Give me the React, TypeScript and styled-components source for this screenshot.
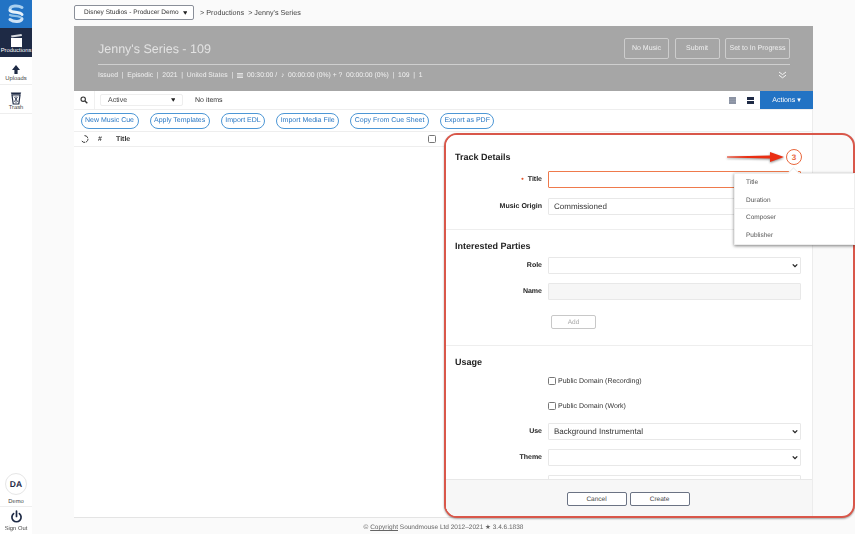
import React from "react";
import styled, { createGlobalStyle } from "styled-components";

const GlobalStyle = createGlobalStyle`
  html, body { margin: 0; padding: 0; height: 100%; background: #fafafa; }
  * { box-sizing: border-box; }
  body {
    font-family: "Liberation Sans", Arial, sans-serif;
    color: #222;
    overflow: hidden;
    text-rendering: geometricPrecision;
  }
`;

const Page = styled.div`
  position: relative;
  display: flex;
  width: 855px;
  height: 534px;
  overflow: hidden;
  opacity: 0.999;
`;

const Sidebar = styled.nav`
  display: flex;
  flex-direction: column;
  width: 32px;
  height: 534px;
  background: #fff;
`;

const LogoTile = styled.div`
  display: flex;
  align-items: center;
  justify-content: center;
  height: 28px;
  background: #2273c4;
`;

const NavItem = styled.div<{ $active?: boolean }>`
  display: flex;
  flex-direction: column;
  align-items: center;
  justify-content: flex-end;
  height: 28.5px;
  padding-bottom: 2px;
  font-size: 5.8px;
  white-space: nowrap;
  color: ${({ $active }) => ($active ? "#fff" : "#444")};
  background: ${({ $active }) => ($active ? "#1e2a45" : "#fff")};
  border-bottom: 1px solid ${({ $active }) => ($active ? "#1e2a45" : "#eee")};
`;

const SidebarBottom = styled.div`
  display: flex;
  flex-direction: column;
  align-items: center;
  margin-top: auto;
`;

const Avatar = styled.div`
  display: flex;
  align-items: center;
  justify-content: center;
  width: 22px;
  height: 22px;
  border: 1px solid #e6e6e6;
  border-radius: 50%;
  font-size: 8.5px;
  font-weight: 700;
  color: #1e2a45;
`;

const SmallLabel = styled.div`
  font-size: 5.8px;
  color: #444;
  line-height: 8px;
`;

const DemoBlock = styled.div`
  display: flex;
  flex-direction: column;
  align-items: center;
  gap: 3px;
  width: 100%;
  border-bottom: 1px solid #eee;
`;

const SignOutBlock = styled.div`
  display: flex;
  flex-direction: column;
  align-items: center;
  gap: 1px;
  padding: 3px 0 1px;
`;

const Main = styled.main`
  display: flex;
  flex-direction: column;
  width: 739px;
  height: 534px;
  margin-left: 42px;
`;

const Crumbs = styled.div`
  display: flex;
  align-items: center;
  gap: 6px;
  height: 26px;
  font-size: 7.2px;
  color: #444;
  padding-bottom: 1px;
`;

const OrgSelect = styled.div`
  display: flex;
  align-items: center;
  justify-content: space-between;
  width: 120px;
  height: 15px;
  padding: 0 6px 0 9px;
  background: #fff;
  border: 1px solid #8a8f99;
  border-radius: 2px;
  font-size: 6.5px;
  color: #333;
`;

const Hero = styled.header`
  height: 65px;
  padding: 10px 23px 0 24px;
  background: #a6a6a6;
  color: #eee;
`;

const HeroTop = styled.div`
  display: flex;
  justify-content: space-between;
  align-items: center;
  height: 26px;
  padding-bottom: 1px;
`;

const HeroTitle = styled.h1`
  margin: 0;
  font-size: 12.5px;
  font-weight: 400;
  color: #e2e2e2;
`;

const HeroActions = styled.div`
  display: flex;
  gap: 5.5px;
`;

const HeroButton = styled.div<{ $width: number }>`
  display: flex;
  align-items: center;
  justify-content: center;
  width: ${({ $width }) => $width}px;
  height: 21px;
  border: 1px solid #cdcdcd;
  border-radius: 2px;
  font-size: 7px;
  color: #f0f0f0;
`;

const HeroRule = styled.div`
  height: 1px;
  margin-top: 2px;
  background: #cfcfcf;
`;

const HeroMeta = styled.div`
  display: flex;
  justify-content: space-between;
  align-items: center;
  height: 16px;
  margin-top: 2px;
  padding-right: 3px;
  font-size: 6.8px;
  color: #f0f0f0;
  white-space: pre;
`;

const MetaLine = styled.span`
  display: flex;
  align-items: center;
  gap: 2px;
`;

const Sheet = styled.section`
  flex: 1;
  background: #fff;
  border-right: 1px solid #ececec;
  border-bottom: 1px solid #e4e4e4;
  margin-bottom: 16px;
`;

const Toolbar = styled.div`
  display: flex;
  align-items: center;
  height: 19px;
  border-bottom: 1px solid #eee;
  font-size: 7px;
`;

const SearchCell = styled.div`
  display: flex;
  align-items: center;
  justify-content: center;
  width: 21px;
  height: 100%;
  border-right: 1px solid #f0f0f0;
`;

const StatusSelect = styled.div`
  display: flex;
  align-items: center;
  justify-content: space-between;
  width: 83px;
  height: 12px;
  margin-left: 5px;
  padding: 0 7px;
  border: 1px solid #eee;
  border-radius: 2px;
  font-size: 7px;
  color: #444;
`;

const ItemCount = styled.span`
  margin-left: 12px;
  color: #333;
`;

const ViewToggles = styled.div`
  display: flex;
  align-items: center;
  gap: 11px;
  margin-left: auto;
  margin-right: 6px;
`;

const ActionsButton = styled.div`
  display: flex;
  align-items: center;
  justify-content: center;
  width: 53px;
  height: 18px;
  margin-right: -1px;
  background: #2273c4;
  color: #fff;
  font-size: 7px;
`;

const PillRow = styled.div`
  display: flex;
  align-items: center;
  gap: 11px;
  height: 22px;
  padding-left: 6.5px;
  border-bottom: 1px solid #eee;
`;

const Pill = styled.div`
  display: flex;
  align-items: center;
  height: 16px;
  padding: 0 3.5px;
  border: 1px solid #4d97d6;
  border-radius: 8px;
  font-size: 7px;
  color: #2a78c4;
  white-space: nowrap;
`;

const TableHead = styled.div`
  display: flex;
  align-items: center;
  height: 15px;
  padding-left: 7px;
  border-bottom: 1px solid #eee;
  font-size: 7px;
  font-weight: 700;
  color: #333;
`;

const HashCell = styled.span`
  width: 18px;
  margin-left: 9px;
`;

const TitleCell = styled.span`
  flex: 1;
`;

const Checkbox = styled.span`
  flex: none;
  width: 8px;
  height: 8px;
  background: #fff;
  border: 1px solid #777;
  border-radius: 1.5px;
`;

const HeadCheck = styled(Checkbox)`
  margin-right: 376px;
`;

const Footer = styled.footer`
  position: absolute;
  left: 0;
  right: 0;
  bottom: 3px;
  text-align: center;
  font-size: 6.5px;
  color: #666;
  padding-left: 32px;

  u { text-decoration: underline; }
`;

const Overlay = styled.aside`
  position: absolute;
  left: 444px;
  top: 133px;
  display: flex;
  width: 411px;
  height: 385px;
  border: 2px solid #d9574a;
  border-radius: 13px;
  overflow: hidden;
  box-shadow: 0 1px 2px rgba(0, 0, 0, 0.35);
  background: #fafafa;
`;

const FormColumn = styled.div`
  display: flex;
  flex-direction: column;
  width: 367px;
  background: #fff;
  border-right: 1px solid #ececec;
`;

const FormScroll = styled.div`
  flex: 1;
  min-height: 0;
  overflow: hidden;
`;

const FormSection = styled.div`
  padding: 0 11px 0 9px;
  border-bottom: 1px solid #eee;
  &:last-child { border-bottom: 0; }
`;

const SectionTitle = styled.h2<{ $top: number; $bottom: number }>`
  margin: 0;
  padding-top: ${({ $top }) => $top}px;
  margin-bottom: ${({ $bottom }) => $bottom}px;
  font-size: 9px;
  line-height: 11px;
  font-weight: 700;
  color: #222;
`;

const Field = styled.div<{ $gap?: number }>`
  display: grid;
  grid-template-columns: 87px 1fr;
  column-gap: 6px;
  align-items: center;
  margin-bottom: ${({ $gap }) => $gap ?? 9}px;
`;

const FieldLabel = styled.label`
  text-align: right;
  font-size: 7px;
  font-weight: 700;
  color: #222;
`;

const RequiredDot = styled.span`
  color: #e2562c;
  margin-right: 4px;
`;

const Control = styled.div<{ $state?: "error" | "disabled" }>`
  display: flex;
  align-items: center;
  justify-content: space-between;
  height: 17px;
  padding: 0 2px 0 5px;
  font-size: 8px;
  color: #333;
  background: ${({ $state }) => ($state === "disabled" ? "#f6f6f6" : "#fff")};
  border: 1px solid ${({ $state }) => ($state === "error" ? "#ef7a4c" : "#e8e8e8")};
  border-radius: 1px;
`;

const CheckRow = styled.label<{ $bottom: number }>`
  display: flex;
  align-items: center;
  gap: 2px;
  margin: 0 0 ${({ $bottom }) => $bottom}px 93px;
  height: 10px;
  font-size: 7px;
  color: #333;
`;

const AddRow = styled.div`
  margin: 0 0 16px 96px;
`;

const AddButton = styled.div`
  display: flex;
  align-items: center;
  justify-content: center;
  width: 45px;
  height: 14px;
  border: 1px solid #c8c8c8;
  border-radius: 2px;
  font-size: 6.5px;
  color: #aaa;
`;

const FormFooter = styled.div`
  display: flex;
  align-items: center;
  justify-content: center;
  gap: 3px;
  height: 37px;
  flex: none;
  padding: 2px 2px 0 0;
  background: #f7f7f7;
  border-top: 1px solid #e8e8e8;
`;

const FooterButton = styled.div`
  display: flex;
  align-items: center;
  justify-content: center;
  width: 60px;
  height: 14px;
  background: #fff;
  border: 1px solid #6b7384;
  border-radius: 2px;
  font-size: 6.5px;
  color: #444;
`;

const Callout = styled.div`
  position: absolute;
  left: 726px;
  top: 149px;
  display: flex;
  align-items: center;
`;

const ArrowWrap = styled.span`
  display: flex;
  filter: drop-shadow(0 1px 1px rgba(0, 0, 0, 0.45));
`;

const CountBadge = styled.div`
  display: flex;
  align-items: center;
  justify-content: center;
  width: 16px;
  height: 16px;
  margin-left: 1px;
  background: #fff;
  border: 1px solid #e8663c;
  border-radius: 50%;
  font-size: 8px;
  font-weight: 700;
  color: #e8663c;
`;

const FieldMenu = styled.div`
  position: absolute;
  left: 734px;
  top: 173px;
  width: 121px;
  height: 72px;
  background: #fff;
  border: 1px solid #eee;
  box-shadow: 0 1px 3px rgba(0, 0, 0, 0.5);

  &::before {
    content: "";
    position: absolute;
    left: 54px;
    top: -5px;
    width: 8px;
    height: 8px;
    background: #fff;
    border-left: 1px solid #eee;
    border-top: 1px solid #eee;
    transform: rotate(45deg);
  }
`;

const MenuItem = styled.div<{ $divided?: boolean }>`
  height: 17.5px;
  padding-left: 11px;
  font-size: 6.5px;
  line-height: 17.5px;
  color: #555;
  border-bottom: ${({ $divided }) => ($divided ? "1px solid #eee" : "0")};
`;

const Chevron = () => (
  <svg width="6" height="5" viewBox="0 0 8 6">
    <path d="M1 1.5 4 4.5 7 1.5" fill="none" stroke="#222" strokeWidth="1.8" />
  </svg>
);

const Caret = () => (
  <svg width="4.5" height="4" viewBox="0 0 5 4">
    <path d="M0 0H5L2.5 4Z" fill="#222" />
  </svg>
);

const Logo = () => (
  <svg width="18" height="20" viewBox="0 0 18 20">
    <g fill="none" strokeLinecap="round">
      <path d="M15 3.5C11 1 3.5 1.5 3 5" stroke="#a9d0ef" strokeWidth="3" />
      <path d="M3 6.5C5 9 13 7.5 15 10.5" stroke="#e8f2fa" strokeWidth="3" />
      <path d="M3 11C6 12.5 12 11.5 15 14" stroke="#8fc0e8" strokeWidth="2.2" />
      <path d="M3 15.5C7 18.5 14 18 15 15" stroke="#cfe3f5" strokeWidth="3" />
    </g>
  </svg>
);

const Clapper = () => (
  <svg width="13" height="14" viewBox="0 0 13 14">
    <path d="M1 1.5 11.5 0 12 2 1.5 3.5Z" fill="#d6d9df" />
    <rect x="1" y="4" width="11" height="9" fill="#fff" />
  </svg>
);

const UploadIcon = () => (
  <svg width="10" height="12" viewBox="0 0 10 12">
    <path d="M5 1 9 6H6.6V10H3.4V6H1Z" fill="#1e2a45" />
  </svg>
);

const TrashIcon = () => (
  <svg width="12" height="14" viewBox="0 0 12 14">
    <path d="M.8 1.5H11.2L10.4 3.5H1.6Z" fill="#1e2a45" />
    <path d="M2 4 3.2 13H8.8L10 4Z" fill="none" stroke="#1e2a45" strokeWidth="1.2" />
    <path d="M4 5.5 8 11M8 5.5 4 11M6 5V12" stroke="#1e2a45" strokeWidth=".7" />
  </svg>
);

const PowerIcon = () => (
  <svg width="13" height="14" viewBox="0 0 13 14">
    <g fill="none" stroke="#1e2a45" strokeWidth="1.7" strokeLinecap="round">
      <path d="M6.5 1V6.5" />
      <path d="M3.6 3.6A4.6 4.6 0 1 0 9.4 3.6" />
    </g>
  </svg>
);

const SearchIcon = () => (
  <svg width="8" height="8" viewBox="0 0 8 8">
    <circle cx="3.2" cy="3.2" r="2.2" fill="none" stroke="#333" strokeWidth="1.1" />
    <path d="M5 5 7.3 7.3" stroke="#333" strokeWidth="1.4" />
  </svg>
);

const ListIcon = () => (
  <svg width="7" height="7" viewBox="0 0 7 7">
    <path d="M0 0H7V7H0Z" fill="#8b93a3" />
    <path d="M0 2.3H7M0 4.6H7" stroke="#a5abb8" strokeWidth=".4" />
  </svg>
);

const CardIcon = () => (
  <svg width="7" height="7" viewBox="0 0 7 7">
    <path d="M0 0H7V3H0ZM0 4H7V7H0Z" fill="#1e2a45" />
  </svg>
);

const DoubleChevron = () => (
  <svg width="9" height="8" viewBox="0 0 9 8">
    <g fill="none" stroke="#f4f4f4" strokeWidth="1">
      <path d="M1 1 4.5 3.6 8 1" />
      <path d="M1 4.2 4.5 6.8 8 4.2" />
    </g>
  </svg>
);

const FilmIcon = () => (
  <svg width="6" height="5" viewBox="0 0 6 5">
    <path d="M0 .5H6M0 4.5H6M1 1V4M3 1V4M5 1V4" stroke="#f0f0f0" strokeWidth=".8" fill="none" />
  </svg>
);

const Spinner = () => (
  <svg width="8" height="8" viewBox="0 0 8 8">
    <path d="M3.5 .6A3.4 3.4 0 1 1 .8 6" fill="none" stroke="#333" strokeWidth="1" strokeDasharray="4 .8" />
  </svg>
);

const RedArrow = () => (
  <svg width="59" height="12" viewBox="0 0 59 12">
    <path d="M1 5.4 44 4.6V1L58 6 44 11V7.4L1 6.6Z" fill="#ea2e12" />
  </svg>
);

const pills = ["New Music Cue", "Apply Templates", "Import EDL", "Import Media File", "Copy From Cue Sheet", "Export as PDF"];

export default function App() {
  return (
    <Page>
      <GlobalStyle />
      <Sidebar>
        <LogoTile><Logo /></LogoTile>
        <NavItem $active><Clapper />Productions</NavItem>
        <NavItem><UploadIcon />Uploads</NavItem>
        <NavItem><TrashIcon />Trash</NavItem>
        <SidebarBottom>
          <DemoBlock>
            <Avatar>DA</Avatar>
            <SmallLabel>Demo</SmallLabel>
          </DemoBlock>
          <SignOutBlock>
            <PowerIcon />
            <SmallLabel>Sign Out</SmallLabel>
          </SignOutBlock>
        </SidebarBottom>
      </Sidebar>

      <Main>
        <Crumbs>
          <OrgSelect>Disney Studios - Producer Demo <Caret /></OrgSelect>
          <span>&gt; Productions &nbsp;&gt; Jenny's Series</span>
        </Crumbs>
        <Hero>
          <HeroTop>
            <HeroTitle>Jenny's Series - 109</HeroTitle>
            <HeroActions>
              <HeroButton $width={45}>No Music</HeroButton>
              <HeroButton $width={45}>Submit</HeroButton>
              <HeroButton $width={65}>Set to In Progress</HeroButton>
            </HeroActions>
          </HeroTop>
          <HeroRule />
          <HeroMeta>
            <MetaLine>
              Issued  |  Episodic  |  2021  |  United States  | <FilmIcon /> 00:30:00 /  ♪  00:00:00 (0%) + ?  00:00:00 (0%)  |  109  |  1
            </MetaLine>
            <DoubleChevron />
          </HeroMeta>
        </Hero>
        <Sheet>
          <Toolbar>
            <SearchCell><SearchIcon /></SearchCell>
            <StatusSelect>Active <Caret /></StatusSelect>
            <ItemCount>No items</ItemCount>
            <ViewToggles><ListIcon /><CardIcon /></ViewToggles>
            <ActionsButton>Actions ▾</ActionsButton>
          </Toolbar>
          <PillRow>
            {pills.map((label) => <Pill key={label}>{label}</Pill>)}
          </PillRow>
          <TableHead>
            <Spinner />
            <HashCell>#</HashCell>
            <TitleCell>Title</TitleCell>
            <HeadCheck />
          </TableHead>
        </Sheet>
      </Main>

      <Overlay>
        <FormColumn>
          <FormScroll>
            <FormSection>
              <SectionTitle $top={17} $bottom={8}>Track Details</SectionTitle>
              <Field $gap={10}><FieldLabel><RequiredDot>•</RequiredDot>Title</FieldLabel><Control $state="error" /></Field>
              <Field $gap={14}><FieldLabel>Music Origin</FieldLabel><Control>Commissioned</Control></Field>
            </FormSection>
            <FormSection>
              <SectionTitle $top={11} $bottom={5}>Interested Parties</SectionTitle>
              <Field><FieldLabel>Role</FieldLabel><Control><span /><Chevron /></Control></Field>
              <Field $gap={15}><FieldLabel>Name</FieldLabel><Control $state="disabled" /></Field>
              <AddRow><AddButton>Add</AddButton></AddRow>
            </FormSection>
            <FormSection>
              <SectionTitle $top={11} $bottom={8}>Usage</SectionTitle>
              <CheckRow $bottom={15}><Checkbox />Public Domain (Recording)</CheckRow>
              <CheckRow $bottom={12}><Checkbox />Public Domain (Work)</CheckRow>
              <Field><FieldLabel>Use</FieldLabel><Control>Background Instrumental<Chevron /></Control></Field>
              <Field><FieldLabel>Theme</FieldLabel><Control><span /><Chevron /></Control></Field>
              <Field><FieldLabel /><Control /></Field>
            </FormSection>
          </FormScroll>
          <FormFooter>
            <FooterButton>Cancel</FooterButton>
            <FooterButton>Create</FooterButton>
          </FormFooter>
        </FormColumn>
      </Overlay>

      <Callout><ArrowWrap><RedArrow /></ArrowWrap><CountBadge>3</CountBadge></Callout>
      <FieldMenu>
        <MenuItem>Title</MenuItem>
        <MenuItem $divided>Duration</MenuItem>
        <MenuItem>Composer</MenuItem>
        <MenuItem>Publisher</MenuItem>
      </FieldMenu>

      <Footer>© <u>Copyright</u> Soundmouse Ltd 2012–2021 ★ 3.4.6.1838</Footer>
    </Page>
  );
}
